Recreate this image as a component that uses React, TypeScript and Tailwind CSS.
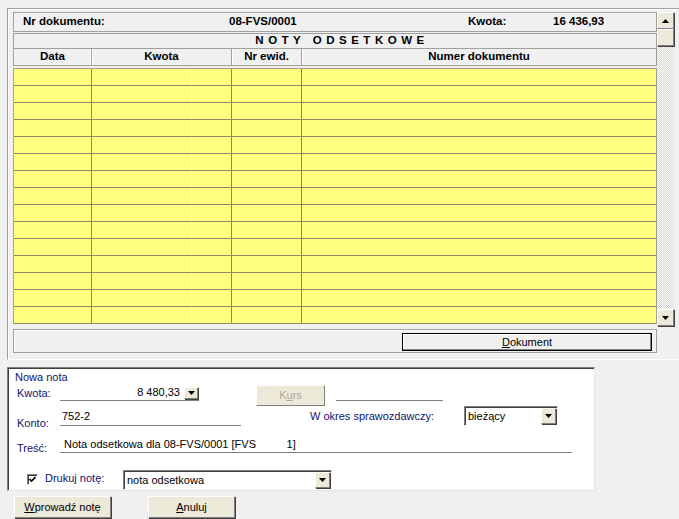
import React from "react";

const ROWS = Array.from({ length: 15 }, (_, i) => i);

function DownTri() {
  return (
    <svg width="7" height="4" viewBox="0 0 7 4">
      <path d="M0 0h7L3.5 4z" fill="#000" />
    </svg>
  );
}

function UpTri() {
  return (
    <svg width="7" height="4" viewBox="0 0 7 4">
      <path d="M0 4h7L3.5 0z" fill="#000" />
    </svg>
  );
}

const raised =
  "border border-t-white border-l-white border-r-[#808080] border-b-[#808080] shadow-[1px_1px_0_#404040] bg-[#ece9d8]";

function ArrowBtn({ w, h }: { w: string; h: string }) {
  return <div className={`${w} ${h} ${raised} flex items-center justify-center`}><DownTri /></div>;
}

function Field({ className, children }: { className: string; children?: React.ReactNode }) {
  return <div className={`border-b border-[#808080] ${className}`}>{children}</div>;
}

export default function App() {
  return (
    <div className="w-[679px] h-[519px] overflow-hidden bg-[#f0f0f0] text-black font-['Liberation_Sans',Arial,sans-serif]">
      {/* upper frame */}
      <div className="ml-[7px] mt-[8px] h-[352px] border-l border-t border-b border-[#a0a0a0] border-b-white shadow-[inset_1px_1px_0_#ffffff] flex items-start pl-[5px] pt-[3px]">
        <div className="w-[644px] flex flex-col">
          <div className="h-[20px] border border-[#a0a0a0] flex items-center pl-[9px] text-[11.5px] font-bold leading-none">
            <span className="w-[206px]">Nr dokumentu:</span>
            <span className="w-[239px]">08-FVS/0001</span>
            <span className="w-[85px]">Kwota:</span>
            <span>16 436,93</span>
          </div>
          <div className="mt-[1px] h-[16px] border border-[#a0a0a0] flex items-center justify-center text-[11.5px] font-bold leading-none tracking-[4.5px] pl-[14px]">
            NOTY ODSETKOWE
          </div>
          <div className="h-[17px] border border-t-0 border-[#a0a0a0] flex text-[11.5px] font-bold leading-[15px]">
            <div className="w-[78px] border-r border-[#a0a0a0] shadow-[inset_-1px_0_0_#ffffff] text-center">Data</div>
            <div className="w-[140px] border-r border-[#a0a0a0] shadow-[inset_1px_0_0_#ffffff] text-center">Kwota</div>
            <div className="w-[70px] border-r border-[#a0a0a0] shadow-[inset_1px_0_0_#ffffff] text-center">Nr ewid.</div>
            <div className="flex-1 shadow-[inset_1px_0_0_#ffffff] text-center">Numer dokumentu</div>
          </div>
          <div className="mt-[2px] border-t border-l border-r border-[#a0a0a0] bg-[#ffff80]">
            {ROWS.map((r) => (
              <div key={r} className="h-[17px] flex border-b border-[#8a8a64]">
                <div className="w-[78px] border-r border-[#8a8a64]" />
                <div className="w-[100px] border-r border-[#fdfde0]" />
                <div className="w-[40px] border-r border-[#8a8a64]" />
                <div className="w-[70px] border-r border-[#8a8a64]" />
                <div className="flex-1" />
              </div>
            ))}
          </div>
          <div className="mt-[5px] h-[24px] border border-[#a0a0a0] shadow-[inset_1px_1px_0_#ffffff] flex justify-end pr-[4px] pt-[3px]">
            <div className="w-[250px] h-[18px] border border-black bg-[#f0f0f0] shadow-[inset_-1px_-1px_0_#808080,inset_1px_1px_0_#ffffff] flex items-center justify-center text-[11px] leading-none">
              <span><span className="underline">D</span>okument</span>
            </div>
          </div>
        </div>
        {/* scrollbar */}
        <div className="w-[17px] h-[314px] flex flex-col bg-[repeating-conic-gradient(#ffffff_0%_25%,#d6d3ce_0%_50%)] bg-size-[2px_2px]">
          <div className={`h-[17px] ${raised} flex items-center justify-center`}><UpTri /></div>
          <div className={`h-[17px] ${raised}`} />
          <div className="flex-1" />
          <div className={`h-[17px] ${raised} flex items-center justify-center`}><DownTri /></div>
        </div>
      </div>

      {/* Nowa nota panel */}
      <div className="ml-[7px] mt-[7px] w-[588px] h-[124px] bg-white border-l border-t border-[#808080] border-r border-b border-r-[#e4e4e4] border-b-[#e4e4e4] shadow-[inset_1px_1px_0_#404040] text-[11px] leading-[13px]">
        <div className="h-[16px] pl-[7px] pt-[3px] text-[#12126b]">Nowa nota</div>

        <div className="h-[22px] flex items-start pl-[9px]">
          <div className="w-[43px] mt-[3px] text-[#12126b]">Kwota:</div>
          <Field className="w-[139px] h-[16px] mt-[1px] flex justify-end items-start">
            <span className="mt-[1px] mr-[4px]">8 480,33</span>
            <div className={`w-[14px] h-[12px] mt-[2px] mr-[1px] ${raised} flex items-center justify-center`}><DownTri /></div>
          </Field>
          <div className={`ml-[57px] w-[69px] h-[21px] mt-[1px] ${raised} shadow-none border-r-[#404040] border-b-[#404040] flex items-center justify-center text-[#aca899]`}>
            <span>K<span className="underline">u</span>rs</span>
          </div>
          <Field className="ml-[11px] w-[107px] h-[17px]" />
        </div>

        <div className="h-[22px] flex items-start pl-[9px]">
          <div className="w-[43px] mt-[11px] text-[#12126b]">Konto:</div>
          <Field className="w-[181px] h-[17px] mt-[3px] pl-[2px] pt-[1px]">752-2</Field>
          <div className="ml-[69px] w-[154px] mt-[4px] text-[#12126b]">W okres sprawozdawczy:</div>
          <div className="w-[94px] h-[20px] border border-t-[#808080] border-l-[#808080] border-r-white border-b-white shadow-[inset_1px_1px_0_#404040] bg-white flex items-center pl-[3px] pr-[1px]">
            <span className="flex-1">bieżący</span>
            <ArrowBtn w="w-[15px]" h="h-[16px]" />
          </div>
        </div>

        <div className="h-[29px] flex items-start pl-[9px]">
          <div className="w-[43px] mt-[14px] text-[#12126b]">Treść:</div>
          <Field className="w-[512px] h-[16px] mt-[9px] pl-[4px] pt-[1px] whitespace-pre">Nota odsetkowa dla 08-FVS/0001 [FVS          1]</Field>
        </div>

        <div className="h-[30px] flex items-start pl-[19px]">
          <div className="w-[11px] h-[11px] mt-[17px] border border-t-[#808080] border-l-[#808080] border-r-white border-b-white shadow-[inset_1px_1px_0_#404040] bg-white flex items-center justify-center">
            <svg width="7" height="7" viewBox="0 0 7 7">
              <path d="M0.5 3 L2.5 5 L6.5 1" stroke="#000" strokeWidth="1.6" fill="none" />
            </svg>
          </div>
          <div className="ml-[7px] w-[78px] mt-[15px] text-[#12126b]">Drukuj notę:</div>
          <div className="w-[209px] h-[20px] mt-[13px] border border-t-[#808080] border-l-[#808080] border-r-white border-b-white shadow-[inset_1px_1px_0_#404040] bg-white flex items-center pl-[3px] pr-[1px]">
            <span className="flex-1">nota odsetkowa</span>
            <ArrowBtn w="w-[15px]" h="h-[16px]" />
          </div>
        </div>
      </div>

      {/* buttons */}
      <div className="flex ml-[14px] mt-[5px] text-[11px] leading-none">
        <div className={`w-[97px] h-[22px] ${raised} flex items-center justify-center`}>
          <span><span className="underline">W</span>prowadź notę</span>
        </div>
        <div className={`ml-[37px] w-[87px] h-[22px] ${raised} flex items-center justify-center`}>
          <span><span className="underline">A</span>nuluj</span>
        </div>
      </div>
    </div>
  );
}
